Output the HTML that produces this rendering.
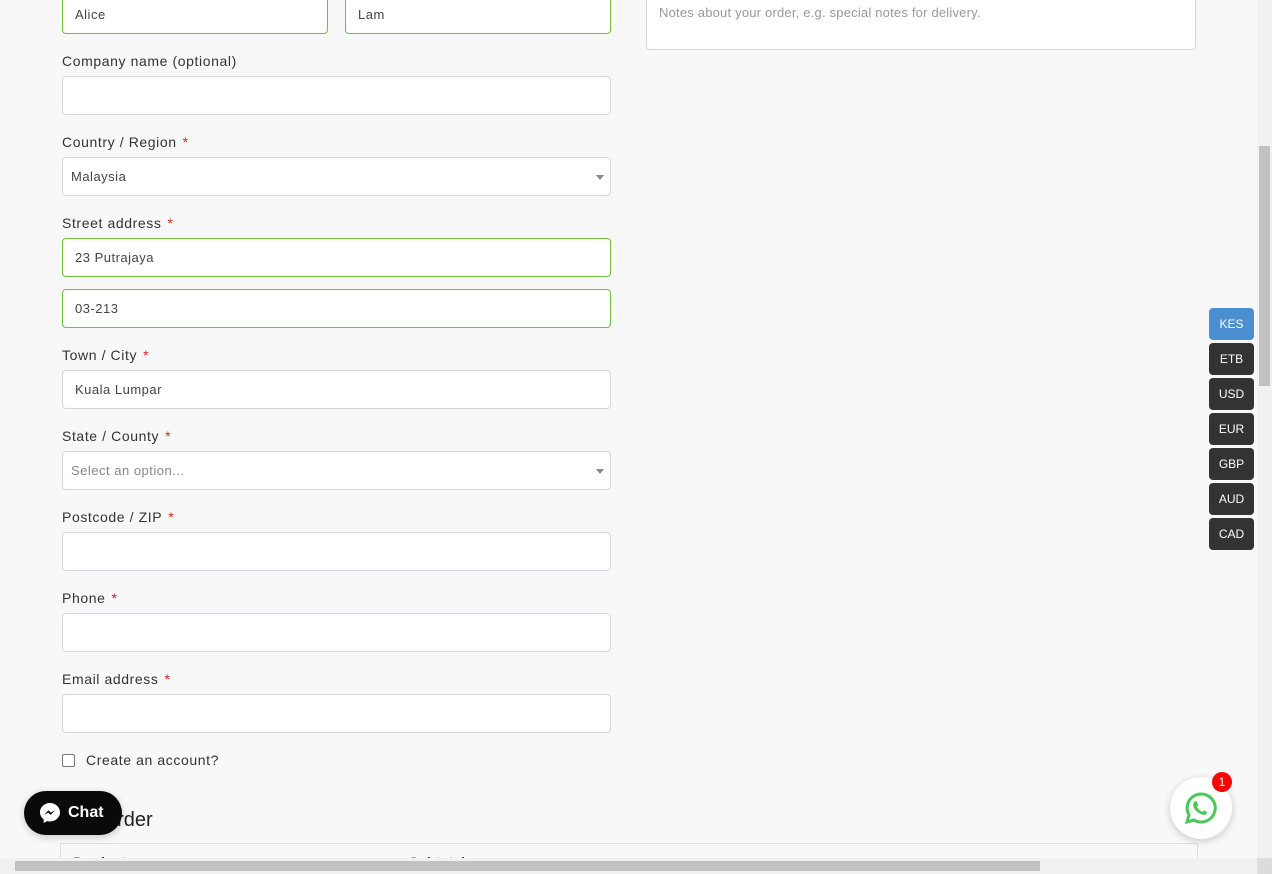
<!DOCTYPE html><html style="overflow:hidden;height:874px"><head><style>
body{margin:0;width:1272px;height:874px;overflow:hidden;background:#f8f8f8;font-family:"Liberation Sans",sans-serif;position:relative;color:#333}
.in{position:absolute;box-sizing:border-box;background:#fff;border:1px solid #d3d6db;border-radius:4px;height:39px;font-size:13px;color:#444;padding-left:12px;line-height:37px;letter-spacing:.5px}
.g{border-color:#6dc23a}
.lb{position:absolute;left:62px;font-size:14px;color:#333;letter-spacing:.6px}
.lb b{color:#e2231a;font-weight:normal;margin-left:6px}
.arr{position:absolute;right:6px;top:17px;border:4px solid transparent;border-top:5px solid #888}
.cur{position:absolute;left:1209px;width:45px;height:32px;border-radius:4px;background:#333;color:#fff;font-size:12px;text-align:center;line-height:32px}
</style></head><body>
<div class="in g" style="left:62px;top:-5px;width:266px">Alice</div>
<div class="in g" style="left:345px;top:-5px;width:266px">Lam</div>
<div class="in" style="left:646px;top:-10px;width:550px;height:60px;line-height:18px;padding-top:13px;color:#999;letter-spacing:.2px">Notes about your order, e.g. special notes for delivery.</div>
<div class="lb" style="top:53px">Company name (optional)</div>
<div class="in" style="left:62px;top:76px;width:549px"></div>
<div class="lb" style="top:134px">Country / Region<b>*</b></div>
<div class="in" style="left:62px;top:157px;width:549px;padding-left:8px">Malaysia<span class="arr"></span></div>
<div class="lb" style="top:215px">Street address<b>*</b></div>
<div class="in g" style="left:62px;top:238px;width:549px">23 Putrajaya</div>
<div class="in g" style="left:62px;top:289px;width:549px">03-213</div>
<div class="lb" style="top:347px">Town / City<b>*</b></div>
<div class="in" style="left:62px;top:370px;width:549px">Kuala Lumpar</div>
<div class="lb" style="top:428px">State / County<b>*</b></div>
<div class="in" style="left:62px;top:451px;width:549px;padding-left:8px;color:#888">Select an option...<span class="arr"></span></div>
<div class="lb" style="top:509px">Postcode / ZIP<b>*</b></div>
<div class="in" style="left:62px;top:532px;width:549px"></div>
<div class="lb" style="top:590px">Phone<b>*</b></div>
<div class="in" style="left:62px;top:613px;width:549px"></div>
<div class="lb" style="top:671px">Email address<b>*</b></div>
<div class="in" style="left:62px;top:694px;width:549px"></div>
<div style="position:absolute;left:62px;top:754px;width:11px;height:11px;border:1px solid #767676;border-radius:2px;background:#fff"></div>
<div class="lb" style="left:86px;top:752px">Create an account?</div>
<div style="position:absolute;left:60px;top:809px;font-size:20px;color:#222">Your order</div>
<div style="position:absolute;left:60px;top:843px;width:1138px;height:31px;border:1px solid #ddd;border-bottom:0;box-sizing:border-box;overflow:hidden"><span style="position:absolute;left:12px;top:10px;font-size:14px;font-weight:bold">Product</span><span style="position:absolute;left:348px;top:10px;font-size:14px;font-weight:bold">Subtotal</span></div>
<div style="position:absolute;left:24px;top:791px;width:98px;height:44px;border-radius:22px;background:#0a0a0a;box-shadow:0 2px 8px rgba(0,0,0,.2);color:#fff;font-weight:bold;font-size:16px;line-height:44px">
<svg style="position:absolute;left:14px;top:10px" width="24" height="24" viewBox="0 0 24 24"><path d="M12 2C6.5 2 2 6.1 2 11.3c0 2.9 1.4 5.4 3.7 7.1V22l3.4-1.9c.9.3 1.9.4 2.9.4 5.5 0 10-4.1 10-9.2S17.5 2 12 2z" fill="#fff"/><path d="M6 14l4.5-4.8 2.3 2.4 4.3-2.4-4.5 4.8-2.3-2.4z" fill="#0a0a0a"/></svg>
<span style="position:absolute;left:44px">Chat</span></div>
<div class="cur" style="top:308px;background:#4a8fd0">KES</div>
<div class="cur" style="top:343px">ETB</div>
<div class="cur" style="top:378px">USD</div>
<div class="cur" style="top:413px">EUR</div>
<div class="cur" style="top:448px">GBP</div>
<div class="cur" style="top:483px">AUD</div>
<div class="cur" style="top:518px">CAD</div>
<div style="position:absolute;left:1170px;top:777px;width:62px;height:62px;border-radius:50%;background:#fff;box-shadow:0 2px 8px rgba(0,0,0,.2)">
<svg style="position:absolute;left:14px;top:14px" width="34" height="34" viewBox="0 0 34 34"><path d="M17 3a14 14 0 0 0-12 21l-2 7 7-2A14 14 0 1 0 17 3z" fill="none" stroke="#4ac959" stroke-width="3"/><path d="M12 10c1 0 1.5 2.5 2 3.5s-1.5 1.5-1 2.5 3 4 5 4.5 1.5-1.5 2.5-1 2.5 1 2.5 2-1.5 2.5-3 2.5-7-2-9.5-6-1-8 1.5-8z" fill="#4ac959"/></svg></div>
<div style="position:absolute;left:1212px;top:772px;width:20px;height:20px;border-radius:50%;background:#f00;color:#fff;font-size:12px;text-align:center;line-height:20px">1</div>
<div style="position:absolute;left:1257px;top:0;width:15px;height:858px;background:#f1f1f1"><div style="position:absolute;left:2px;top:146px;width:11px;height:240px;background:#c1c1c1"></div></div>
<div style="position:absolute;left:0;top:858px;width:1257px;height:16px;background:#f1f1f1"><div style="position:absolute;left:15px;top:3px;width:1025px;height:10px;background:#c1c1c1"></div></div>
<div style="position:absolute;left:1257px;top:858px;width:15px;height:16px;background:#dcdcdc"></div>
</body></html>
